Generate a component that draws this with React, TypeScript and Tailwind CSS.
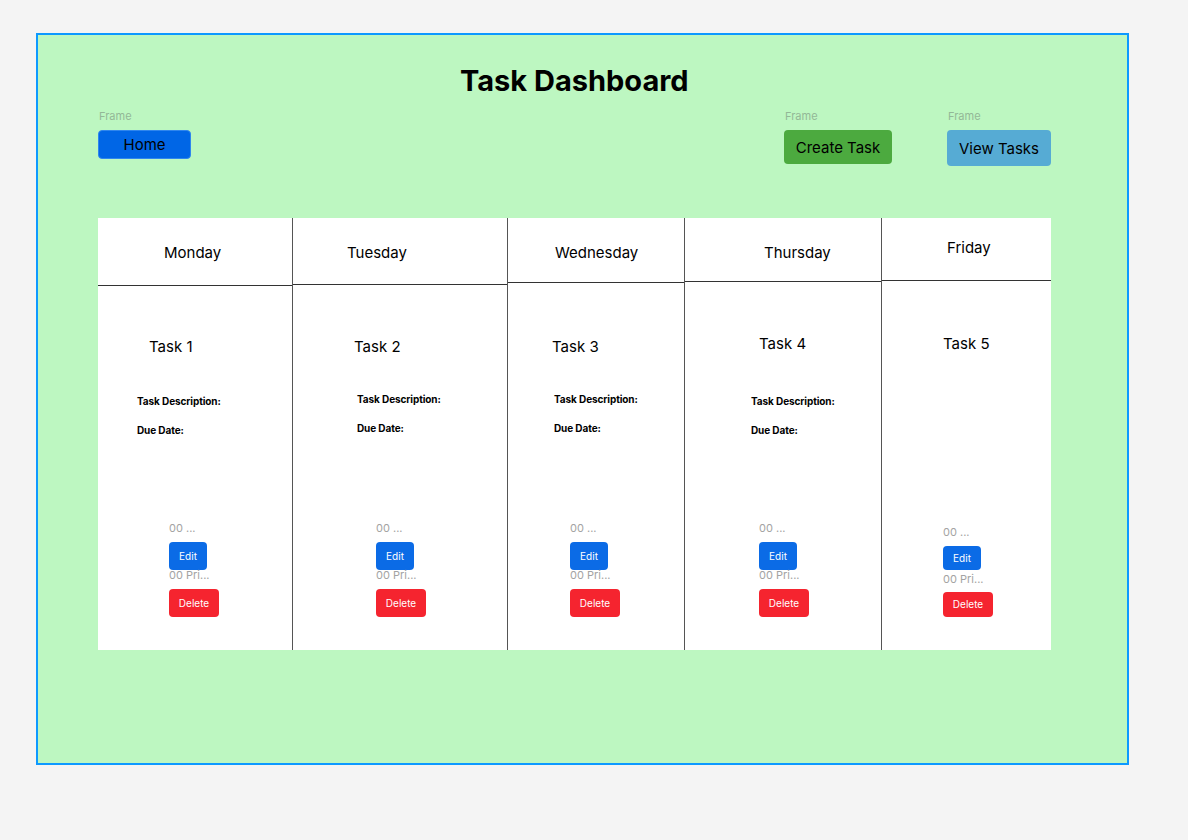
const font = { fontFamily: "Inter, 'Noto Sans', sans-serif" };

type Col = {
  day: string;
  task: string;
  width: string;
  head: string;
  dayPad: string;
  body: string;
  taskPad: string;
  descPad?: string;
  descMt?: string;
  btnPad: string;
  metaMt: string;
  first?: boolean;
  last?: boolean;
};

const cols: Col[] = [
  {
    day: "Monday",
    task: "Task 1",
    width: "w-[194px]",
    head: "h-[68px] items-center pt-[2px]",
    dayPad: "pl-[66px]",
    body: "pt-[51px]",
    taskPad: "pl-[51px]",
    descPad: "pl-[39px]",
    descMt: "mt-[37px]",
    btnPad: "pl-[71px]",
    metaMt: "mt-[84px]",
    first: true,
  },
  {
    day: "Tuesday",
    task: "Task 2",
    width: "w-[215px]",
    head: "h-[67px] items-center pt-[3px]",
    dayPad: "pl-[54px]",
    body: "pt-[52px]",
    taskPad: "pl-[61px]",
    descPad: "pl-[64px]",
    descMt: "mt-[35px]",
    btnPad: "pl-[83px]",
    metaMt: "mt-[86px]",
  },
  {
    day: "Wednesday",
    task: "Task 3",
    width: "w-[177px]",
    head: "h-[65px] items-center pt-[5px]",
    dayPad: "pl-[47px]",
    body: "pt-[54px]",
    taskPad: "pl-[44px]",
    descPad: "pl-[46px]",
    descMt: "mt-[35px]",
    btnPad: "pl-[62px]",
    metaMt: "mt-[86px]",
  },
  {
    day: "Thursday",
    task: "Task 4",
    width: "w-[197px]",
    head: "h-[64px] items-center pt-[6px]",
    dayPad: "pl-[79px]",
    body: "pt-[52px]",
    taskPad: "pl-[74px]",
    descPad: "pl-[66px]",
    descMt: "mt-[40px]",
    btnPad: "pl-[74px]",
    metaMt: "mt-[84px]",
  },
  {
    day: "Friday",
    task: "Task 5",
    width: "w-[170px]",
    head: "h-[63px] items-center pb-[3px]",
    dayPad: "pl-[65px]",
    body: "pt-[53px]",
    taskPad: "pl-[61px]",
    btnPad: "pl-[61px]",
    metaMt: "mt-[171px]",
    last: true,
  },
];

function DayColumn({ c }: { c: Col }) {
  return (
    <div
      className={`${c.width} flex flex-col ${c.first ? "" : "border-l border-[#555555]"}`}
    >
      <div className={`flex ${c.head} border-b border-[#333333]`}>
        <span className={`${c.dayPad} text-[15px] leading-[20px] text-black`}>{c.day}</span>
      </div>
      <div className={`flex flex-col ${c.body}`}>
        <div className={`${c.taskPad} text-[15px] leading-[20px] text-black`}>{c.task}</div>
        {c.descPad && (
          <div className={`${c.descPad} ${c.descMt} flex flex-col gap-[15px]`}>
            <div className="text-[10px] leading-[14px] font-bold tracking-[-0.1px] text-black">Task Description:</div>
            <div className="text-[10px] leading-[14px] font-bold tracking-[-0.1px] text-black">Due Date:</div>
          </div>
        )}
        <div className={`${c.btnPad} ${c.metaMt} flex flex-col items-start`}>
          <div className="text-[11px] leading-[14px] text-[#a3a3a3]">00 ...</div>
          <div
            className={`mt-[7px] w-[38px] ${c.last ? "h-[24px]" : "h-[28px]"} rounded-[4px] bg-[#0b6be6] flex items-center justify-center text-[10px] text-white`}
          >
            Edit
          </div>
          <div
            className={`${c.last ? "mt-[2px]" : "mt-[-2px]"} text-[11px] leading-[14px] text-[#a3a3a3]`}
          >
            00 Pri...
          </div>
          <div
            className={`${c.last ? "mt-[6px] h-[25px]" : "mt-[7px] h-[28px]"} w-[50px] rounded-[4px] bg-[#f5242f] flex items-center justify-center text-[10px] text-white`}
          >
            Delete
          </div>
        </div>
      </div>
    </div>
  );
}

function FrameButton({
  label,
  className,
}: {
  label: string;
  className: string;
}) {
  return (
    <div className="flex flex-col">
      <span className="text-[11px] leading-[14px] text-[#93b797] pl-[1px]">Frame</span>
      <div
        className={`mt-[7px] rounded-[4px] flex items-center justify-center text-[15px] text-black ${className}`}
      >
        {label}
      </div>
    </div>
  );
}

export default function App() {
  return (
    <div className="w-[1188px] h-[840px] bg-[#f4f4f4] pt-[33px] pl-[36px]" style={font}>
      <div className="w-[1093px] h-[732px] border-2 border-[#0d99ff] bg-[#bdf7c1] pl-[60px]">
        <h1 className="mt-[29px] ml-[362px] text-[29px] leading-[34px] font-bold text-black">
          Task Dashboard
        </h1>
        <div className="mt-[11px] w-[953px] flex justify-between items-start">
          <FrameButton label="Home" className="w-[93px] h-[29px] bg-[#0066e6] border border-[#2f86ee] pt-[2px]" />
          <div className="flex gap-[55px]">
            <FrameButton label="Create Task" className="w-[108px] h-[34px] bg-[#4caa3f] pt-[2px]" />
            <FrameButton label="View Tasks" className="w-[104px] h-[36px] bg-[#56abd4] pt-[2px]" />
          </div>
        </div>
        <div className="mt-[52px] w-[953px] h-[432px] bg-white flex">
          {cols.map((c) => (
            <DayColumn key={c.day} c={c} />
          ))}
        </div>
      </div>
    </div>
  );
}
